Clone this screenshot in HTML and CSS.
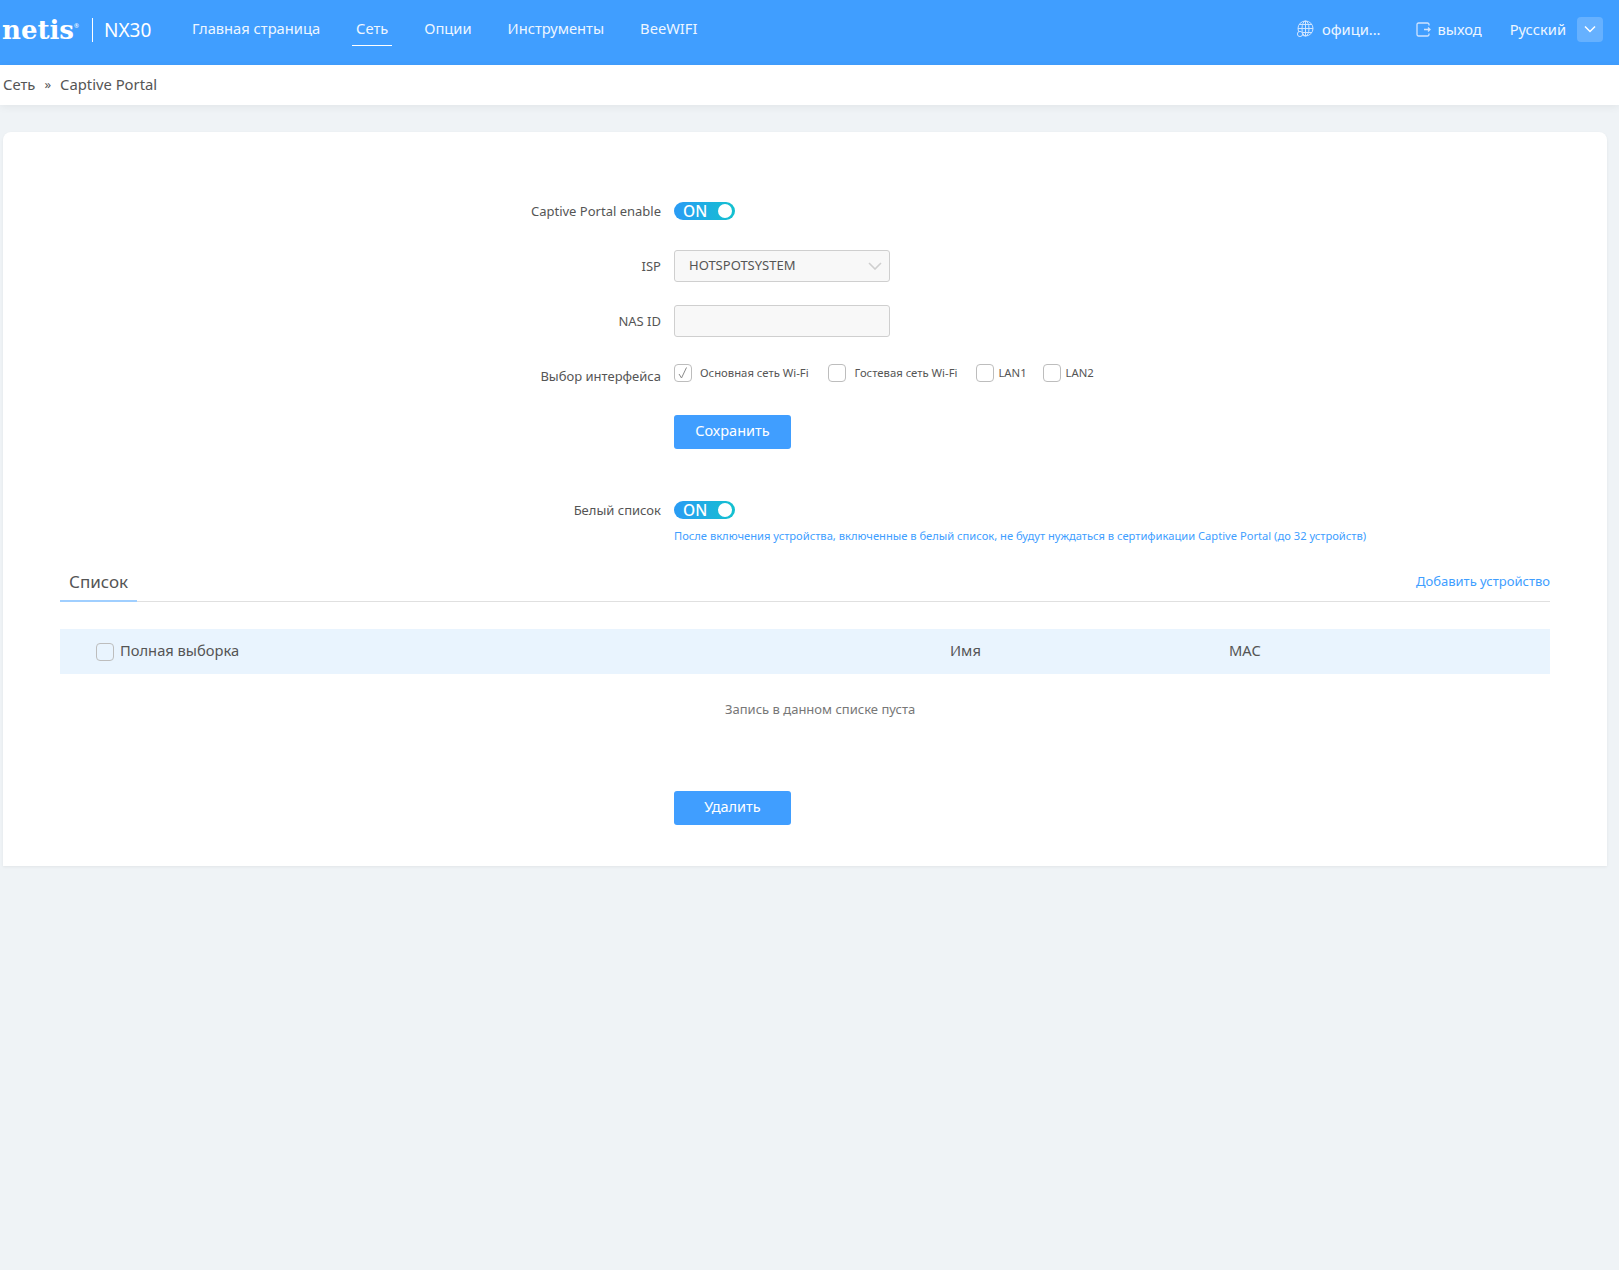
FILE: index.html
```html
<!DOCTYPE html>
<html lang="ru">
<head>
<meta charset="utf-8">
<title>netis NX30</title>
<link rel="stylesheet" href="styles.css">
</head>
<body>
<header class="topbar">
  <div class="brand"><span class="logo">netis</span><sup class="reg">®</sup><span class="model">NX30</span></div>
  <nav class="menu">
    <a class="menu-item">Главная страница</a>
    <a class="menu-item active">Сеть</a>
    <a class="menu-item">Опции</a>
    <a class="menu-item">Инструменты</a>
    <a class="menu-item">BeeWIFI</a>
  </nav>
  <div class="tools">
    <span class="tool tool-site">
      <svg class="tool-icon" viewBox="0 0 18 18" width="18" height="18" fill="none" stroke="#cfe4ff" stroke-width="1"><circle cx="9.5" cy="8.5" r="7.5"/><ellipse cx="9.5" cy="8.5" rx="3.5" ry="7.5"/><path d="M2 8.5h15M3 4.5h13M3 12.5h13M9.5 1v15"/><circle cx="4" cy="14" r="2.6" fill="#409eff"/></svg>
      офици...
    </span>
    <span class="tool tool-exit">
      <svg class="tool-icon" viewBox="0 0 15 15" width="15" height="15" fill="none" stroke="#cfe4ff" stroke-width="1.3"><path d="M13 3.5V2.5a1.5 1.5 0 0 0-1.5-1.5h-9A1.5 1.5 0 0 0 1 2.5v10A1.5 1.5 0 0 0 2.500 14h9a1.500 1.500 0 0 0 1.500-1.500V11.500"/><path d="M8 7.500h6M12 5.500l2 2-2 2"/></svg>
      выход
    </span>
    <span class="tool tool-lang">Русский</span>
    <span class="lang-btn"><svg viewBox="0 0 12 8" width="12" height="8" fill="none" stroke="#fff" stroke-width="1.500"><path d="M1 1.500l5 5 5-5"/></svg></span>
  </div>
</header>

<div class="crumbs"><span>Сеть</span><span class="crumb-sep">»</span><span>Captive Portal</span></div>

<main class="card">
  <section class="form">
    <div class="row row-enable">
      <label class="label">Captive Portal enable</label>
      <span class="switch"><span class="switch-text">ON</span><span class="switch-knob"></span></span>
    </div>
    <div class="row row-field">
      <label class="label">ISP</label>
      <div class="field select">
        <span>HOTSPOTSYSTEM</span>
        <svg viewBox="0 0 14 8" width="14" height="8" fill="none" stroke="#cfcfcf" stroke-width="1.600"><path d="M1 1l6 6 6-6"/></svg>
      </div>
    </div>
    <div class="row row-field">
      <label class="label">NAS ID</label>
      <div class="field"></div>
    </div>
    <div class="row row-checks">
      <label class="label">Выбор интерфейса</label>
      <div class="checks">
        <span class="check-item"><span class="box"><svg viewBox="0 0 12 14" width="12" height="14" fill="none" stroke="#8a8a8a" stroke-width="1"><path d="M2 8l2.500 4L9.500 1.500"/></svg></span>Основная сеть Wi-Fi</span>
        <span class="check-item"><span class="box"></span>Гостевая сеть Wi-Fi</span>
        <span class="check-item"><span class="box"></span>LAN1</span>
        <span class="check-item"><span class="box"></span>LAN2</span>
      </div>
    </div>
    <div class="row row-save">
      <span class="label"></span>
      <button class="btn">Сохранить</button>
    </div>
    <div class="row row-white">
      <label class="label">Белый список</label>
      <span class="switch"><span class="switch-text">ON</span><span class="switch-knob"></span></span>
    </div>
    <div class="row row-hint">
      <span class="label"></span>
      <span class="hint">После включения устройства, включенные в белый список, не будут нуждаться в сертификации Captive Portal (до 32 устройств)</span>
    </div>
  </section>

  <section class="list">
    <div class="tabs">
      <span class="tab">Список</span>
      <a class="add-link">Добавить устройство</a>
    </div>
    <div class="table-head">
      <span class="col col-all"><span class="box box-all"></span><span class="col-text">Полная выборка</span></span>
      <span class="col col-name"><span class="col-text">Имя</span></span>
      <span class="col col-mac"><span class="col-text">MAC</span></span>
    </div>
    <div class="empty">Запись в данном списке пуста</div>
    <div class="row row-delete">
      <span class="delete-offset"></span>
      <button class="btn">Удалить</button>
    </div>
  </section>
</main>
</body>
</html>
```

FILE: styles.css
```css
* { box-sizing: border-box; }
html, body { margin: 0; padding: 0; }
body {
  min-height: 1270px;
  background: #eff3f6;
  font-family: "Noto Sans", "Open Sans", sans-serif;
  color: #555;
  font-size: 14px;
}
.topbar {
  height: 65px;
  background: #409eff;
  color: #fff;
  display: flex;
  align-items: center;
}
.brand {
  display: flex;
  align-items: center;
  width: 188px;
  padding-left: 2px;
  flex: none;
}
.logo {
  font-family: "DejaVu Serif", "Liberation Serif", serif;
  font-weight: 700;
  font-size: 26px;
  line-height: 30px;
  letter-spacing: 0;
  margin-top: -6px;
}
.reg { font-size: 6px; line-height: 6px; margin: -14px 0 0 0; align-self: center; }
.model {
  margin-left: 13px;
  padding-left: 11px;
  border-left: 1px solid #fff;
  font-size: 19px;
  line-height: 24px;
  margin-top: -6px;
}
.menu { display: flex; height: 65px; gap: 28px; }
.menu-item {
  font-size: 14.7px;
  line-height: 20px;
  padding: 18px 4px 0;
  height: 46px;
  color: #eef6ff;
}
.menu-item.active { border-bottom: 1px solid #fff; }
.tools {
  margin-left: auto;
  display: flex;
  align-items: center;
  padding-right: 16px;
  margin-top: -7px;
  font-size: 14.7px;
  color: #eef6ff;
}
.tool { display: flex; align-items: center; }
.tool-icon { margin-right: 7px; }
.tool-site .tool-icon { margin-right: 8px; }
.tool-site { margin-right: 35px; }
.tool-exit { margin-right: 28px; }
.lang-btn {
  width: 26px;
  height: 25px;
  margin-left: 11px;
  border-radius: 4px;
  background: #66b1ff;
  display: flex;
  align-items: center;
  justify-content: center;
}
.crumbs {
  height: 40px;
  background: #fff;
  box-shadow: 0 2px 8px rgba(0, 0, 0, 0.06);
  display: flex;
  align-items: center;
  padding: 0 0 2px 3px;
  gap: 9px;
  font-size: 14.8px;
  color: #555;
}
.crumb-sep { font-size: 13px; }
.card {
  margin: 27px 12px 0 3px;
  height: 734px;
  background: #fff;
  border-radius: 8px 8px 0 0;
  box-shadow: 0 1px 3px rgba(0, 0, 0, 0.06);
  padding-top: 70px;
}
.row { display: flex; align-items: center; }
.label {
  width: 658px;
  flex: none;
  text-align: right;
  font-size: 13px;
  line-height: 18px;
  color: #555;
  margin-right: 13px;
}
.row-enable { height: 18px; }
.switch {
  width: 61px;
  height: 18px;
  border-radius: 9px;
  background: linear-gradient(90deg, #2a9bf5, #13c1cf);
  display: flex;
  align-items: center;
  justify-content: space-between;
  padding: 0 3px 0 9px;
  color: #fff;
}
.switch-text { font-size: 15.5px; font-weight: 500; line-height: 18px; }
.switch-knob { width: 14px; height: 14px; border-radius: 50%; background: #fff; }
.row-field { height: 32px; }
.row-enable + .row-field { margin-top: 30px; }
.row-field + .row-field { margin-top: 23px; }
.field {
  width: 216px;
  height: 32px;
  background: #f8f8f8;
  border: 1px solid #cfcfcf;
  border-radius: 3px;
  display: flex;
  align-items: center;
  justify-content: space-between;
  padding: 0 7px 0 14px;
  font-size: 13px;
  color: #555;
}
.select span { margin-top: -2px; }
.row-checks { margin-top: 27px; height: 22px; align-items: flex-start; }
.row-checks .label { margin-top: 3px; }
.checks { display: flex; gap: 19px; font-size: 11.3px; line-height: 18px; color: #555; }
.check-item { display: flex; align-items: center; }
.box {
  width: 18px;
  height: 18px;
  border: 1px solid #bdbdbd;
  border-radius: 4px;
  background: transparent;
  margin-right: 8px;
  display: flex;
  align-items: center;
  justify-content: center;
  flex: none;
}
.check-item:nth-child(2) .box { margin-right: 9px; }
.check-item:nth-child(3) .box { margin-right: 4px; }
.check-item:nth-child(3) { margin-right: -3px; }
.check-item:nth-child(4) .box { margin-right: 5px; }
.row-save { margin-top: 29px; height: 34px; }
.btn {
  width: 117px;
  height: 34px;
  border: 0;
  border-radius: 3px;
  background: #409eff;
  color: #fff;
  font-family: inherit;
  font-size: 14.5px;
  line-height: 20px;
  padding: 0 0 4px;
}
.row-white { margin-top: 52px; height: 18px; }
.row-hint { margin-top: 9px; height: 16px; }
.hint { font-size: 11.17px; line-height: 16px; color: #409eff; white-space: nowrap; }
.list { padding: 0 57px; }
.tabs {
  margin-top: 18px;
  height: 40px;
  display: flex;
  justify-content: space-between;
  align-items: flex-start;
  border-bottom: 1px solid #e0e0e0;
}
.tab {
  width: 77px;
  height: 40px;
  padding: 9px 0 0 9px;
  font-size: 17px;
  line-height: 22px;
  color: #555;
  border-bottom: 2px solid #a0cfff;
}
.add-link { font-size: 13px; line-height: 20px; color: #409eff; margin-top: 9px; }
.table-head {
  margin-top: 27px;
  height: 45px;
  background: #e9f4fe;
  display: flex;
  align-items: center;
  font-size: 14.7px;
  color: #555;
}
.col { display: flex; align-items: center; }
.col-text { margin-top: -3px; }
.col-all { width: 890px; padding-left: 36px; }
.col-name { width: 279px; }
.box-all { margin-right: 6px; }
.empty {
  margin-top: 25px;
  height: 20px;
  padding-left: 665px;
  font-size: 13px;
  line-height: 20px;
  color: #777;
}
.row-delete { margin-top: 72px; }
.delete-offset { width: 614px; flex: none; }
```
